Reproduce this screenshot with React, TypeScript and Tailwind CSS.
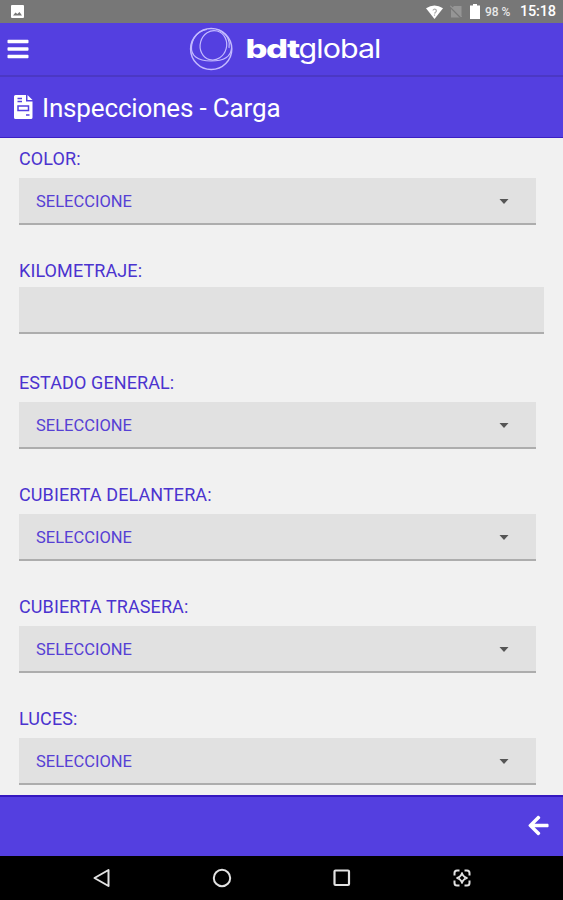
import { FaArrowLeft, FaBars } from "react-icons/fa"

const fields = [
  { label: "COLOR:", type: "select" },
  { label: "KILOMETRAJE:", type: "text" },
  { label: "ESTADO GENERAL:", type: "select" },
  { label: "CUBIERTA DELANTERA:", type: "select" },
  { label: "CUBIERTA TRASERA:", type: "select" },
  { label: "LUCES:", type: "select" },
]

function StatusBar() {
  return (
    <div className="flex h-[23px] shrink-0 items-center bg-[#777777] pl-[11px] pr-2 text-white">
      <svg width="13" height="13" viewBox="0 0 13 13">
        <rect width="13" height="13" rx="1" fill="#fff" />
        <path d="M2 10.500 4.500 7.500l1.800 1.500L8.500 7l2.500 3.500z" fill="#777" />
      </svg>
      <div className="ml-auto flex items-center">
        <svg width="17" height="14" viewBox="0 0 17 14" className="mr-px">
          <path d="M0 3.200Q8.500-2.200 17 3.200L8.500 14z" fill="#fff" />
          <path d="M7 5.500a1.700 1.700 0 1 1 2.500 1.800L8.500 8.500M8.500 9.500v1.200" fill="none" stroke="#aaa" strokeWidth="1.200" />
        </svg>
        <svg width="12" height="13" viewBox="0 0 12 13" className="ml-[6px]">
          <path d="M4 1h7.500v11.500H1V4z" fill="#959595" />
          <path d="M0 1.500 11.500 13" stroke="#777" strokeWidth="2.200" />
          <path d="M0 .5 11.500 12" stroke="#a5a5a5" strokeWidth="1" />
        </svg>
        <svg width="10" height="15" viewBox="0 0 10 15" className="ml-[8px]">
          <path d="M3 0h4v1.500h3V15H0V1.500h3z" fill="#fff" />
        </svg>
        <span className="ml-[5px] mt-px w-[27px] whitespace-nowrap text-[12px] font-medium leading-none text-[#e8e8e8]">98 %</span>
        <span className="ml-[8px] mt-[2px] w-[35px] whitespace-nowrap text-[14.500px] font-medium leading-none tracking-[-0.200px]">15:18</span>
      </div>
    </div>
  )
}

function Logo() {
  return (
    <svg width="194" height="48" viewBox="0 0 194 48" className="ml-[160px]">
      <g fill="none" stroke="#c3baff" strokeWidth="1.200">
        <circle cx="22.200" cy="24" r="20.600" strokeWidth="1.500" />
        <ellipse cx="24.400" cy="20.300" rx="13.200" ry="14.800" transform="rotate(15 24.400 20.300)" />
        <path d="M31 5.500C39 10 41.500 17 40 23M2.500 22C1.800 30 8 36 22 36C34 36 42 32 42.500 23M2.500 22C3 14 8 6 18 4.500" />
      </g>
      <g fill="#fff" fontFamily="Inter, sans-serif" fontSize="26">
        <text x="56.500" y="32.500" fontWeight="800" letterSpacing="-1.200" textLength="53" lengthAdjust="spacingAndGlyphs">bdt</text>
        <text x="109.500" y="32.500" fontWeight="400" letterSpacing="-0.800" textLength="82" lengthAdjust="spacingAndGlyphs">global</text>
      </g>
    </svg>
  )
}

function Header() {
  return (
    <header className="flex h-[54px] shrink-0 items-center border-b-2 border-[#4b38c4] bg-[#543fe0] pl-[6px]">
      <FaBars size={24} className="-mr-[1px] text-white" />
      <Logo />
    </header>
  )
}

function PageTitle() {
  return (
    <div className="flex h-[61px] shrink-0 items-center border-b border-[#3b1fc4] bg-[#543fe0] pl-[14px] text-white">
      <svg width="19" height="24" viewBox="0 0 19 24">
        <path d="M0 1.500Q0 0 1.500 0H12v6.500h6.500v16q0 1.500-1.500 1.500H1.500Q0 24 0 22.500z" fill="#fff" />
        <path d="M13.500 0 18.500 5H13.500z" fill="#fff" />
        <path d="M3.500 3.500h4.500M3.500 6.500h4.500M12 20h3.500" stroke="#543fe0" strokeWidth="1.400" />
        <rect x="4" y="11" width="10.500" height="4.500" fill="none" stroke="#543fe0" strokeWidth="1.500" />
      </svg>
      <h1 className="ml-[9px] mt-[2px] text-[26px] leading-none tracking-[-0.160px]">Inspecciones - Carga</h1>
    </div>
  )
}

function Field({ label, type }: { label: string; type: string }) {
  return (
    <div className="h-28 shrink-0 pl-[19px]">
      <label className={`flex items-center text-[18px] leading-none tracking-[0.100px] text-[#4b33cf] ${type === "text" ? "h-[37px] pt-[4px]" : "h-[40px] pt-px"}`}>
        {label}
      </label>
      {type === "text" ? (
        <div className="h-[47px] w-[525px] border-b-2 border-[#adadad] bg-[#e1e1e1]" />
      ) : (
        <div className="flex h-[47px] w-[517px] items-center justify-between border-b-2 border-[#adadad] bg-[#e1e1e1] pl-[17px] pr-[27px] pt-[2px] text-[#5640d4]">
          <span className="pt-[2px] text-[16.500px] leading-none">SELECCIONE</span>
          <svg width="10" height="5" viewBox="0 0 10 5">
            <path d="M.5 0h9L5 5z" fill="#555" />
          </svg>
        </div>
      )}
    </div>
  )
}

function NavBar() {
  return (
    <nav className="flex h-[44px] shrink-0 items-center bg-black pl-[92px]">
      <div className="flex gap-[100px]">
        <svg width="20" height="20" viewBox="0 0 20 20" fill="none" stroke="#e2e2e2" strokeWidth="2">
          <path d="M16.500 2v16L2.500 10z" strokeLinejoin="round" />
        </svg>
        <svg width="20" height="20" viewBox="0 0 20 20" fill="none" stroke="#e2e2e2" strokeWidth="2">
          <circle cx="10" cy="10" r="8.200" />
        </svg>
        <svg width="20" height="20" viewBox="0 0 20 20" fill="none" stroke="#e2e2e2" strokeWidth="2.200">
          <rect x="2.500" y="2.500" width="14.500" height="14.500" rx="1" />
        </svg>
        <svg width="20" height="20" viewBox="0 0 20 20" fill="none" stroke="#e2e2e2" strokeWidth="2">
          <path d="M2.500 7.500V5q0-2.500 2.500-2.500h2.500M12.500 2.500H15q2.500 0 2.500 2.500v2.500M17.500 12.500V15q0 2.500-2.500 2.500h-2.500M7.500 17.500H5Q2.500 17.500 2.500 15v-2.500" />
          <path d="M10 4.500Q11 9 15.500 10 11 11 10 15.500 9 11 4.500 10 9 9 10 4.500z" strokeWidth="1.300" />
          <circle cx="10" cy="10" r="2.500" strokeWidth="1" />
        </svg>
      </div>
    </nav>
  )
}

export default function App() {
  return (
    <div className="flex h-[900px] w-[563px] flex-col overflow-hidden bg-[#f1f1f1] font-[Roboto,sans-serif]">
      <StatusBar />
      <Header />
      <PageTitle />
      <main className="flex min-h-0 flex-1 flex-col overflow-hidden">
        {fields.map((field) => (
          <Field key={field.label} label={field.label} type={field.type} />
        ))}
      </main>
      <footer className="flex h-[61px] shrink-0 items-center justify-end border-t-2 border-[#3518c0] bg-[#543fe0] pr-[13px]">
        <FaArrowLeft size={23} className="mb-[3px] text-white" />
      </footer>
      <NavBar />
    </div>
  )
}
